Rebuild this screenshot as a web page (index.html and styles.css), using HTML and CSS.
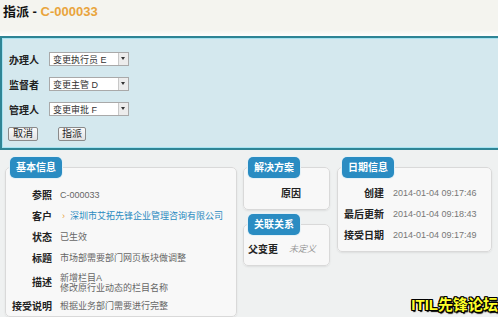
FILE: index.html
```html
<!DOCTYPE html>
<html lang="zh-CN">
<head>
  <meta charset="UTF-8">
  <title>指派 - C-000033</title>
  <link rel="stylesheet" href="styles.css">
</head>
<body>
  <header class="page-title">
    <h1>指派 - <span class="ref">C-000033</span></h1>
  </header>

  <form class="assign-panel">
    <div class="form-row">
      <label>办理人</label>
      <div class="fake-select"><span>变更执行员 E</span><i class="arrow"></i></div>
    </div>
    <div class="form-row">
      <label>监督者</label>
      <div class="fake-select"><span>变更主管 D</span><i class="arrow"></i></div>
    </div>
    <div class="form-row">
      <label>管理人</label>
      <div class="fake-select"><span>变更审批 F</span><i class="arrow"></i></div>
    </div>
    <div class="form-buttons">
      <button type="button">取消</button>
      <button type="button">指派</button>
    </div>
  </form>

  <main class="details">
    <div class="col col-left">
      <fieldset class="box">
        <legend>基本信息</legend>
        <table class="info">
          <tr><th>参照</th><td>C-000033</td></tr>
          <tr><th>客户</th><td><span class="bullet">›</span><a href="#">深圳市艾拓先锋企业管理咨询有限公司</a></td></tr>
          <tr><th>状态</th><td>已生效</td></tr>
          <tr><th>标题</th><td>市场部需要部门网页板块做调整</td></tr>
          <tr class="multi"><th>描述</th><td>新增栏目A<br>修改原行业动态的栏目名称</td></tr>
          <tr><th>接受说明</th><td>根据业务部门需要进行完整</td></tr>
        </table>
      </fieldset>
    </div>

    <div class="col col-mid">
      <fieldset class="box">
        <legend>解决方案</legend>
        <table class="info solution">
          <tr><th>原因</th><td></td></tr>
        </table>
      </fieldset>
      <fieldset class="box">
        <legend>关联关系</legend>
        <table class="info relation">
          <tr><th>父变更</th><td class="undefined">未定义</td></tr>
        </table>
      </fieldset>
    </div>

    <div class="col col-right">
      <fieldset class="box">
        <legend>日期信息</legend>
        <table class="info dates">
          <tr><th>创建</th><td>2014-01-04 09:17:46</td></tr>
          <tr><th>最后更新</th><td>2014-01-04 09:18:43</td></tr>
          <tr><th>接受日期</th><td>2014-01-04 09:17:49</td></tr>
        </table>
      </fieldset>
    </div>
  </main>

  <div class="watermark">ITIL先锋论坛</div>
</body>
</html>
```

FILE: styles.css
```css
* {
  margin: 0;
  padding: 0;
  box-sizing: border-box;
}

body {
  font-family: 'Liberation Sans', 'Noto Sans CJK SC', sans-serif;
  font-size: 9px;
  color: #555;
  background-color: #eff1f1;
  height: 317px;
  overflow: hidden;
  position: relative;
}

/* titulo */
.page-title {
  height: 36px;
  padding: 4px 3px 0;
  background: linear-gradient(#f4f4ef 0, #f4f4ef 30px, #ffffff 36px);
}

.page-title h1 {
  font-size: 13px;
  line-height: 16px;
  color: #111;
}

.page-title .ref {
  color: #e9a43c;
}

/* painel de atribuicao */
.assign-panel {
  background-color: #d4e8ee;
  border: 2px solid #2f8595;
  border-right: none;
  box-shadow: inset 1px 1px 0 #a6e3f2, inset 0 -1px 0 #a6e3f2;
  padding: 14px 7px 8px;
  height: 114px;
}

.form-row {
  display: flex;
  align-items: center;
  height: 14px;
  margin-bottom: 11px;
}

.form-row label {
  width: 40px;
  font-size: 10px;
  font-weight: bold;
  color: #222;
}

.fake-select {
  display: flex;
  align-items: center;
  width: 80px;
  height: 14px;
  background: #fff;
  border: 1px solid #a9a9a9;
  font-size: 9px;
  color: #333;
}

.fake-select span {
  flex: 1;
  padding-left: 3px;
  white-space: nowrap;
  overflow: hidden;
}

.fake-select .arrow {
  width: 10px;
  height: 12px;
  border-left: 1px solid #c8c8c8;
  background: #ececec;
  position: relative;
}

.fake-select .arrow::after {
  content: '';
  position: absolute;
  left: 2px;
  top: 4px;
  border-left: 2px solid transparent;
  border-right: 2px solid transparent;
  border-top: 3px solid #333;
}

.form-buttons {
  display: flex;
  gap: 20px;
  margin-left: -1px;
}

.form-buttons button {
  height: 14px;
  padding: 0;
  font-family: inherit;
  font-size: 10px;
  line-height: 12px;
  white-space: nowrap;
  color: #222;
  background: linear-gradient(#fafafa, #e2e2e2);
  border: 1px solid #8a8a8a;
  border-radius: 2px;
}

.form-buttons button:first-child {
  width: 30px;
}

.form-buttons button:last-child {
  width: 28px;
}

/* detalhes */
.details {
  display: flex;
  align-items: flex-start;
  gap: 6px;
  padding: 7px 0 0 5px;
}

.col-left {
  width: 232px;
}

.col-mid {
  width: 87px;
  display: flex;
  flex-direction: column;
  gap: 4px;
}

.col-right {
  width: 155px;
  margin-left: 1px;
}

.box {
  border: 1px solid #d9d9d9;
  border-radius: 5px;
  background-color: #f8f8f8;
  box-shadow: 0 1px 2px rgba(0, 0, 0, 0.08);
  padding: 4px 4px 5px;
  min-width: 0;
}

.box legend {
  height: 21px;
  line-height: 21px;
  padding: 0 6px;
  font-size: 10px;
  font-weight: bold;
  color: #fff;
  background-color: #2a8cc2;
  border-radius: 5px;
  box-shadow: 0 0 0 1px #e4f1f7;
}

.info {
  border-collapse: collapse;
}

.info th {
  width: 42px;
  text-align: right;
  font-size: 10px;
  font-weight: bold;
  color: #222;
  white-space: nowrap;
  padding: 5px 0;
  line-height: 11px;
}

.info td {
  padding: 5px 0 5px 8px;
  line-height: 11px;
  color: #666;
  white-space: nowrap;
}

.info tr.multi td,
.info tr.multi th {
  padding-top: 4px;
  padding-bottom: 3px;
  line-height: 10px;
}

.info a {
  color: #2a8ac0;
  text-decoration: none;
}

.info .bullet {
  color: #e9a43c;
  margin: 0 5px 0 2px;
}

.col-left .box {
  height: 160px;
  padding-top: 7px;
}

.solution th {
  width: 53px;
}

.solution {
  margin-top: 1px;
}

.relation th {
  width: 34px;
  text-align: left;
}

.relation td.undefined {
  color: #999;
  font-style: italic;
  padding-left: 7px;
}

.dates {
  margin-top: 1px;
}

.dates td {
  padding-left: 9px;
  color: #777;
}

/* marca d'agua */
.watermark {
  position: absolute;
  right: 0;
  bottom: 3px;
  font-size: 15px;
  font-weight: bold;
  color: #ffff2a;
  text-shadow: -1px -1px 0 #000, 1px -1px 0 #000, -1px 1px 0 #000, 1px 1px 0 #000,
    0 -1px 0 #000, 0 1px 0 #000, -1px 0 0 #000, 1px 0 0 #000, 1px 2px 1px #000;
}
```
